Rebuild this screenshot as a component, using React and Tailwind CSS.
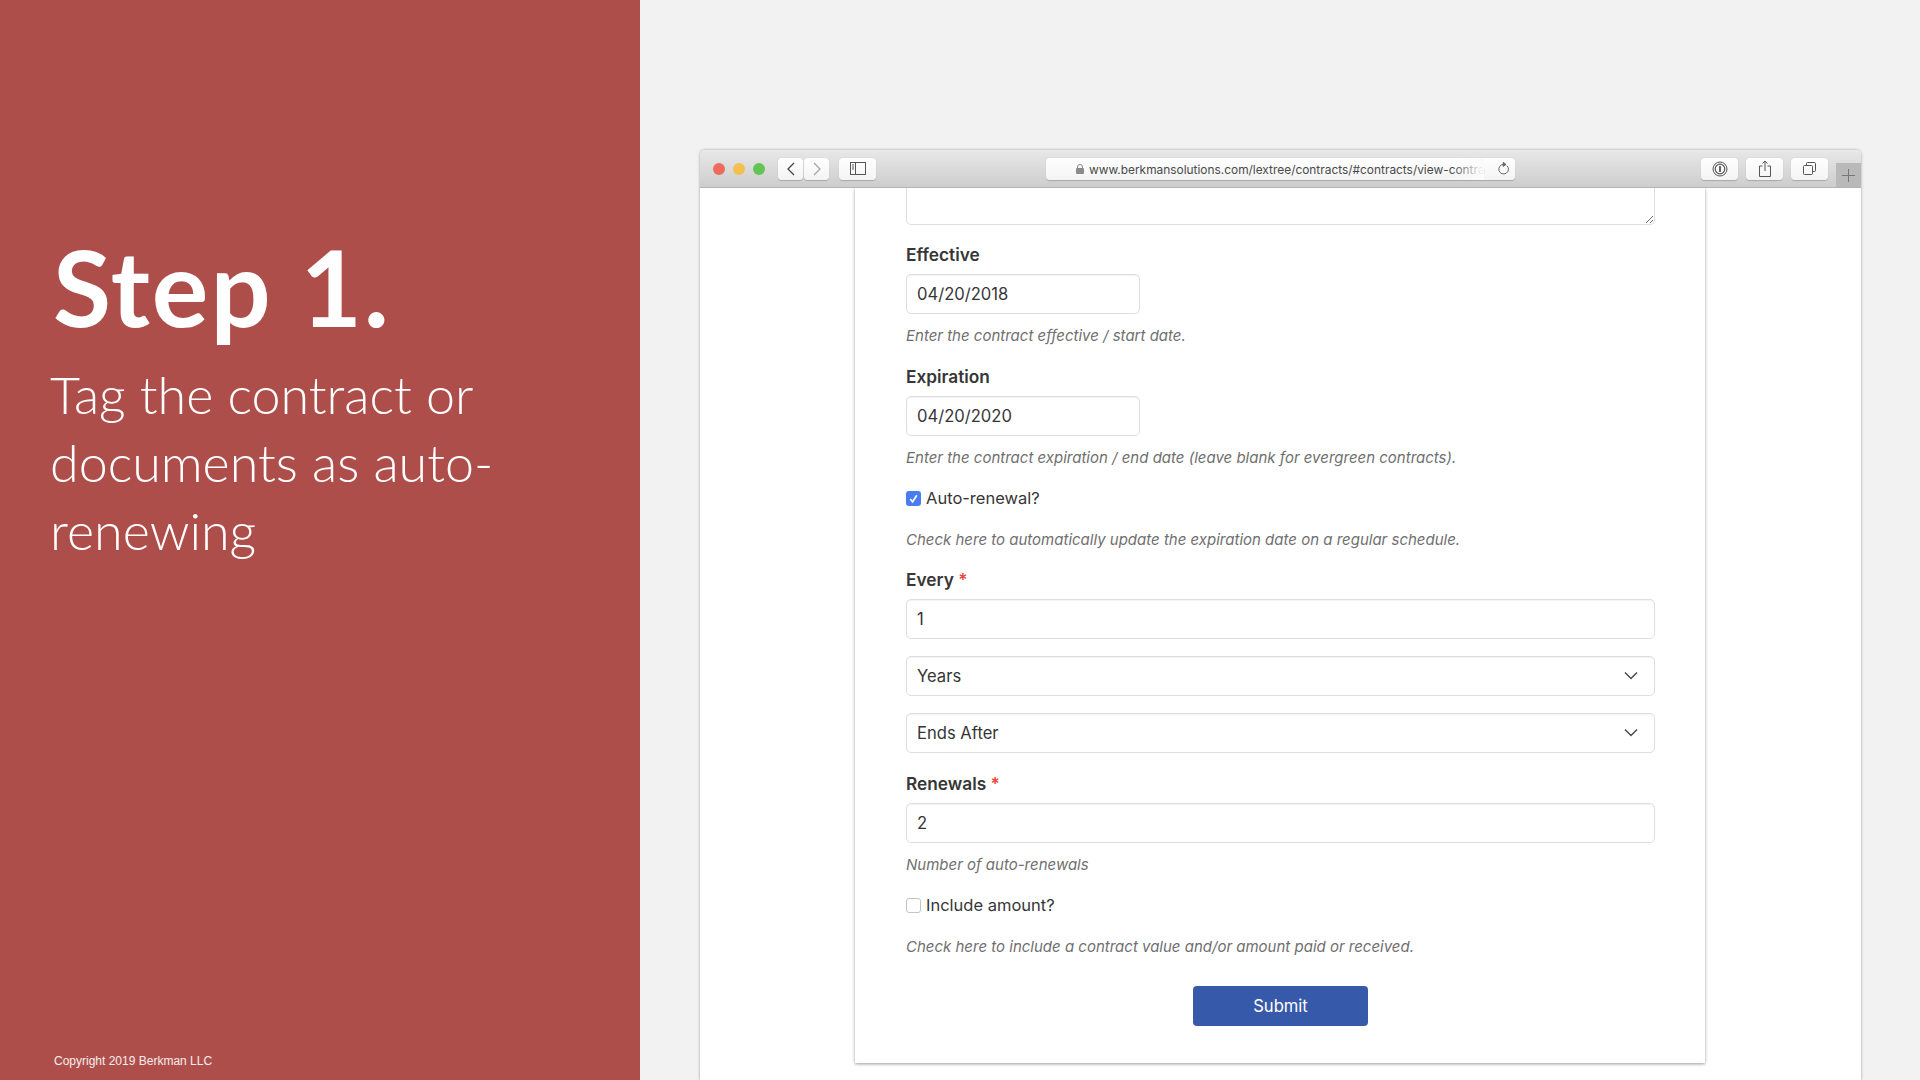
import React from 'react';

const Label = ({ children, required, className = '' }) => (
  <div className={`h-[22px] text-[17.3px] leading-[22px] font-semibold text-[#363636] ${className}`}>
    {children}
    {required && <span className="text-[#f14336]"> *</span>}
  </div>
);

const Hint = ({ children, className = '' }) => (
  <div className={`h-[22px] text-[15px] leading-[23px] italic text-[#6f6f6f] ${className}`}>{children}</div>
);

const Box = ({ children, className = '' }) => (
  <div className={`h-10 flex items-center justify-between pl-[10px] pr-4 pt-px bg-white border border-[#dedede] rounded-[5px] text-[16.6px] text-[#363636] shadow-[inset_0_1px_1px_rgba(0,0,0,0.05)] ${className}`}>
    {children}
  </div>
);

const Chevron = () => (
  <svg className="mb-[3px]" width="14" height="9" viewBox="0 0 14 9" fill="none" stroke="#4a4a4a" strokeWidth="1.5">
    <path d="M1 1.5 7 7.5 13 1.5" />
  </svg>
);

const CheckRow = ({ checked, children, className = '' }) => (
  <div className={`h-6 flex items-center text-[16.5px] text-[#363636] ${className}`}>
    {checked ? (
      <span className="w-[15px] h-[15px] mr-[5px] rounded-[3px] bg-[#4a7cf0] flex items-center justify-center">
        <svg width="11" height="11" viewBox="0 0 10 10" fill="none" stroke="#fff" strokeWidth="1.5">
          <path d="M2 5.5 4.2 8 8 2" />
        </svg>
      </span>
    ) : (
      <span className="w-[15px] h-[15px] mr-[5px] rounded-[3px] bg-white border border-[#c4c4c4]" />
    )}
    {children}
  </div>
);

const ToolButton = ({ children, className = '' }) => (
  <div className={`h-[22px] bg-gradient-to-b from-white to-[#f4f4f4] rounded-[4px] flex items-center justify-center shadow-[0_0.5px_1px_rgba(0,0,0,0.2)] ${className}`}>
    {children}
  </div>
);

const TitleBar = () => (
  <div className="h-[38px] shrink-0 flex items-center relative rounded-t-[5px] bg-gradient-to-b from-[#e8e8e8] to-[#cdcdcd] border-b border-[#b4b4b4] pl-[13px]">
    <span className="w-3 h-3 rounded-full bg-[#ee6a5e]" />
    <span className="w-3 h-3 rounded-full bg-[#f5bf4f] ml-2" />
    <span className="w-3 h-3 rounded-full bg-[#61c554] ml-2" />
    <ToolButton className="w-[25px] ml-[13px]">
      <svg width="10" height="14" viewBox="0 0 10 14" fill="none" stroke="#444" strokeWidth="1.3"><path d="M8 1 2 7l6 6" /></svg>
    </ToolButton>
    <ToolButton className="w-[25px] ml-px">
      <svg width="10" height="14" viewBox="0 0 10 14" fill="none" stroke="#a5a5a5" strokeWidth="1.3"><path d="M2 1l6 6-6 6" /></svg>
    </ToolButton>
    <ToolButton className="w-[37px] ml-[10px]">
      <svg width="16" height="13" viewBox="0 0 16 13" fill="none" stroke="#555" strokeWidth="1">
        <rect x="0.5" y="0.5" width="15" height="12" />
        <path d="M5.5 0.5v12" />
        <path d="M2 3h2M2 5h2M2 7h2" />
      </svg>
    </ToolButton>
    <ToolButton className="w-[469px] ml-[170px] relative">
      <div className="absolute left-[30px] top-0 h-[22px] pt-[2px] flex items-center text-[11.9px] text-[#4a4a4a] whitespace-nowrap w-[408px]">
        <svg className="shrink-0 mr-[5px] mb-[2px]" width="8" height="10" viewBox="0 0 8 10" fill="#8a8a8a">
          <rect x="0" y="4" width="8" height="6" rx="1" />
          <path d="M1.5 4.5V3a2.5 2.5 0 0 1 5 0v1.5" fill="none" stroke="#8a8a8a" />
        </svg>
        www.berkmansolutions.com/lextree/contracts/#contracts/view-contra
        <span className="absolute right-0 top-0 h-full w-8 bg-gradient-to-r from-transparent to-[#fbfbfb]" />
      </div>
      <svg className="absolute right-[5px] top-[4px]" width="13" height="14" viewBox="0 0 13 14" fill="none" stroke="#666" strokeWidth="1">
        <path d="M9.8 3.6a4.8 4.8 0 1 1-3.3-1.2" />
        <path d="M6.2 0.4 9 2.4 6.2 4.4z" fill="#666" />
      </svg>
    </ToolButton>
    <ToolButton className="w-[37px] ml-[186px]">
      <svg width="16" height="16" viewBox="0 0 16 16" fill="none" stroke="#555">
        <circle cx="8" cy="8" r="7" strokeWidth="1" />
        <circle cx="8" cy="8" r="4.8" strokeWidth="1.2" />
        <path d="M8 5v6" strokeWidth="1.8" />
      </svg>
    </ToolButton>
    <ToolButton className="w-[37px] ml-2">
      <svg width="12" height="17" viewBox="0 0 12 17" fill="none" stroke="#555" strokeWidth="1">
        <path d="M3.5 6H.5v10.5h11V6h-3" />
        <path d="M6 11V1M3.5 3.5 6 1l2.5 2.5" />
      </svg>
    </ToolButton>
    <ToolButton className="w-[37px] ml-2">
      <svg width="13" height="13" viewBox="0 0 13 13" fill="none" stroke="#555" strokeWidth="1">
        <rect x="0.5" y="3.5" width="9" height="9" rx="1" />
        <path d="M3.5 3.5v-2a1 1 0 0 1 1-1h7a1 1 0 0 1 1 1v7a1 1 0 0 1-1 1h-2" />
      </svg>
    </ToolButton>
    <div className="absolute right-0 bottom-0 w-[25px] h-[24px] bg-[#b9b9b9] flex items-center justify-center">
      <svg width="13" height="13" viewBox="0 0 13 13" stroke="#777" strokeWidth="1"><path d="M6.5 0v13M0 6.5h13" /></svg>
    </div>
  </div>
);

const App = () => {
  return (
    <div className="w-[1920px] h-[1080px] overflow-hidden flex bg-[#f2f2f2] font-['Inter',sans-serif]">
      <aside className="w-[640px] shrink-0 bg-[#ae4e4a] text-white flex flex-col pl-[50px] pt-[226px] pb-[9px] font-['Lato',sans-serif]">
        <h1 className="text-[106px] leading-[120px] font-bold ml-[3px] tracking-[2px]">Step 1.</h1>
        <p className="text-[52px] leading-[68px] font-light mt-[14px] w-[500px]">
          Tag the contract or documents as auto-renewing
        </p>
        <div className="mt-auto ml-1 text-[12px] leading-5 text-white/90 font-['Liberation_Sans',sans-serif]">Copyright 2019 Berkman LLC</div>
      </aside>

      <main className="flex-1 pl-[60px] pt-[150px]">
        <div className="w-[1161px] h-[930px] flex flex-col bg-white rounded-t-[5px] shadow-[0_0_3px_rgba(0,0,0,0.35)]">
          <TitleBar />
          <div className="flex-1 overflow-hidden">
            <div className="w-[850px] ml-[155px] bg-white pl-[51px] pr-[50px] pb-[37px] shadow-[0_1px_3px_rgba(0,0,0,0.4)]">
              <div className="h-[37px] border border-t-0 border-[#dedede] rounded-b-[5px] relative">
                <svg className="absolute right-px bottom-px" width="8" height="8" viewBox="0 0 8 8" stroke="#666" strokeWidth="1"><path d="M1 8 8 1M5 8l3-3" /></svg>
              </div>

              <Label className="mt-[19px]">Effective</Label>
              <Box className="w-[234px] mt-2">04/20/2018</Box>
              <Hint className="mt-[10px]">Enter the contract effective / start date.</Hint>

              <Label className="mt-[20px]">Expiration</Label>
              <Box className="w-[234px] mt-2">04/20/2020</Box>
              <Hint className="mt-[10px]">Enter the contract expiration / end date (leave blank for evergreen contracts).</Hint>

              <CheckRow checked className="mt-[18px]">Auto-renewal?</CheckRow>
              <Hint className="mt-[18px]">Check here to automatically update the expiration date on a regular schedule.</Hint>

              <Label required className="mt-[19px]">Every</Label>
              <Box className="mt-2">1</Box>
              <Box className="mt-[17px]">Years<Chevron /></Box>
              <Box className="mt-[17px]">Ends After<Chevron /></Box>

              <Label required className="mt-[20px]">Renewals</Label>
              <Box className="mt-2">2</Box>
              <Hint className="mt-[10px]">Number of auto-renewals</Hint>

              <CheckRow className="mt-[18px]">Include amount?</CheckRow>
              <Hint className="mt-[18px]">Check here to include a contract value and/or amount paid or received.</Hint>

              <div className="mt-[29px] flex justify-center">
                <div className="w-[175px] h-10 pt-px rounded-[4px] bg-[#3759a9] text-white text-[16.6px] flex items-center justify-center">Submit</div>
              </div>
            </div>
          </div>
        </div>
      </main>
    </div>
  );
};

export default App;
